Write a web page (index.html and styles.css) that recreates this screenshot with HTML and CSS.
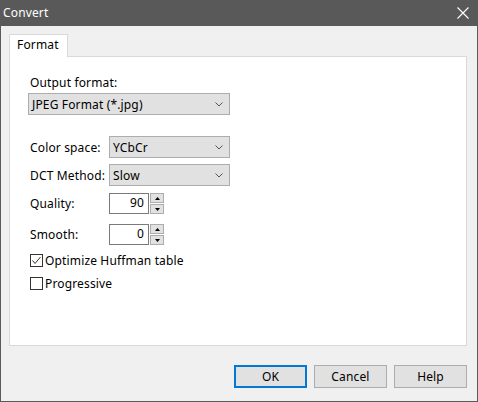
FILE: index.html
```html
<!DOCTYPE html>
<html>
<head>
<meta charset="utf-8">
<link rel="stylesheet" href="styles.css">
</head>
<body>
<div class="window">
  <div class="titlebar">
    <span class="title">Convert</span>
    <svg class="close" width="12" height="12" viewBox="0 0 12 12"><path d="M0.5 0.5 L11.5 11.5 M11.5 0.5 L0.5 11.5" stroke="#fff" stroke-width="1.1" fill="none"/></svg>
  </div>
  <div class="content">
    <div class="tabs"><div class="tab">Format</div></div>
    <div class="panel">
      <div class="label top">Output format:</div>
      <div class="select wide"><span>JPEG Format (*.jpg)</span><svg class="chev" width="8" height="5" viewBox="0 0 8 5"><path d="M0.5 0.5 L4 4 L7.5 0.5" stroke="#555" stroke-width="1" fill="none"/></svg></div>

      <div class="row r-color"><span class="rlabel">Color space:</span><div class="select narrow"><span>YCbCr</span><svg class="chev" width="8" height="5" viewBox="0 0 8 5"><path d="M0.5 0.5 L4 4 L7.5 0.5" stroke="#555" stroke-width="1" fill="none"/></svg></div></div>
      <div class="row r-dct"><span class="rlabel">DCT Method:</span><div class="select narrow"><span>Slow</span><svg class="chev" width="8" height="5" viewBox="0 0 8 5"><path d="M0.5 0.5 L4 4 L7.5 0.5" stroke="#555" stroke-width="1" fill="none"/></svg></div></div>

      <div class="row r-quality"><span class="rlabel">Quality:</span><div class="spin"><div class="num">90</div><div class="arrows"><div class="arr"><svg width="5" height="3" viewBox="0 0 5 3"><path d="M2.5 0 L5 3 L0 3 Z" fill="#000"/></svg></div><div class="arr"><svg width="5" height="3" viewBox="0 0 5 3"><path d="M0 0 L5 0 L2.5 3 Z" fill="#000"/></svg></div></div></div></div>
      <div class="row r-smooth"><span class="rlabel">Smooth:</span><div class="spin"><div class="num">0</div><div class="arrows"><div class="arr"><svg width="5" height="3" viewBox="0 0 5 3"><path d="M2.5 0 L5 3 L0 3 Z" fill="#000"/></svg></div><div class="arr"><svg width="5" height="3" viewBox="0 0 5 3"><path d="M0 0 L5 0 L2.5 3 Z" fill="#000"/></svg></div></div></div></div>

      <div class="check c-first"><span class="box"><svg width="11" height="11" viewBox="0 0 11 11"><path d="M1.5 5.5 L4 8.5 L9.5 2" stroke="#333" stroke-width="1" fill="none"/></svg></span><span>Optimize Huffman table</span></div>
      <div class="check c-second"><span class="box"></span><span>Progressive</span></div>
    </div>
    <div class="buttons">
      <div class="btn default">OK</div>
      <div class="btn">Cancel</div>
      <div class="btn">Help</div>
    </div>
  </div>
</div>
</body>
</html>
```

FILE: styles.css
```css
* { box-sizing: border-box; }
html, body { margin: 0; padding: 0; }
body {
  font-family: "Noto Sans", "Open Sans", sans-serif;
  font-size: 12px;
  letter-spacing: 0.15px;
  color: #000;
  background: #f0f0f0;
}
.window {
  width: 478px;
  height: 402px;
  border: 1px solid #5a5a5a;
  border-top: 0;
  background: #f0f0f0;
  display: flex;
  flex-direction: column;
}
.titlebar {
  height: 26px;
  background: #595959;
  display: flex;
  align-items: center;
  justify-content: space-between;
  padding: 0 9px 0 3px;
  margin: 0 -1px;
}
.title {
  color: #fff;
  font-size: 12px;
  line-height: 16px;
}
.close { display: block; }
.content {
  padding: 8px 10px 0 8px;
  display: flex;
  flex-direction: column;
}
.tabs { display: flex; height: 22px; }
.tab {
  width: 59px;
  height: 23px;
  background: #fff;
  border: 1px solid #d9d9d9;
  border-bottom: 0;
  padding-left: 7px;
  line-height: 20px;
  position: relative;
  z-index: 1;
}
.panel {
  height: 290px;
  background: #fff;
  border: 1px solid #d9d9d9;
  padding: 18px 0 0 18px;
  display: flex;
  flex-direction: column;
}
.label { line-height: 16px; padding-left: 2px; }
.select {
  height: 22px;
  background: #e1e1e1;
  border: 1px solid #adadad;
  display: flex;
  align-items: center;
  justify-content: space-between;
  padding: 0 6px 0 3px;
}
.select.wide { width: 202px; margin-top: 2px; }
.select.narrow { width: 121px; }
.chev { display: block; }
.row { display: flex; align-items: center; }
.rlabel { width: 81px; padding-left: 2px; white-space: nowrap; }
.r-color { margin-top: 21px; }
.r-dct { margin-top: 6px; }
.r-quality { margin-top: 7px; }
.r-smooth { margin-top: 10px; }
.spin { display: flex; height: 21px; }
.num {
  width: 40px;
  height: 21px;
  border: 1px solid #7a7a7a;
  background: #fff;
  text-align: right;
  padding-right: 4px;
  line-height: 18px;
}
.arrows {
  margin-left: 1px;
  display: flex;
  flex-direction: column;
  gap: 1px;
}
.arr {
  width: 14px;
  height: 10px;
  background: #e1e1e1;
  border: 1px solid #adadad;
  display: flex;
  align-items: center;
  justify-content: center;
}
.arr svg { display: block; }
.check {
  display: flex;
  align-items: center;
  height: 17px;
  padding-left: 2px;
}
.c-first { margin-top: 7px; }
.c-second { margin-top: 6px; }
.box {
  width: 13px;
  height: 13px;
  border: 1px solid #333;
  background: #fff;
  margin-right: 2px;
  display: flex;
  align-items: center;
  justify-content: center;
}
.box svg { display: block; }
.buttons {
  display: flex;
  justify-content: flex-end;
  gap: 7px;
  margin-top: 19px;
}
.btn {
  width: 73px;
  height: 23px;
  background: #e1e1e1;
  border: 1px solid #adadad;
  display: flex;
  align-items: center;
  justify-content: center;
}
.btn.default { border: 2px solid #0078d7; }
```
